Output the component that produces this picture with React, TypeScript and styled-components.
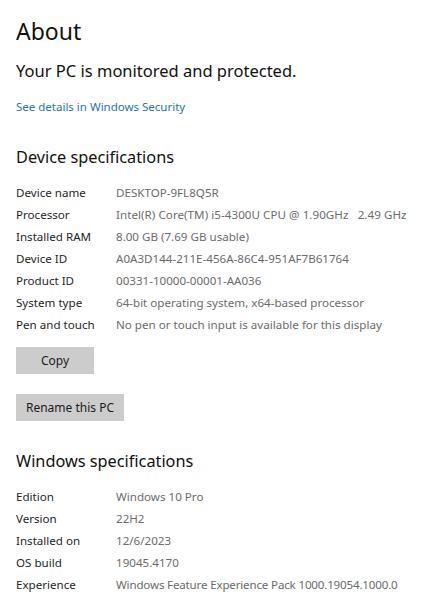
import React from "react";
import styled, { createGlobalStyle } from "styled-components";

const Global = createGlobalStyle`
  html, body { margin: 0; padding: 0; background: #ffffff; }
  body { font-family: "Noto Sans", "Open Sans", sans-serif; color: #1a1a1a; }
  * { box-sizing: border-box; }
`;

const Page = styled.div`
  width: 421px;
  height: 600px;
  overflow: hidden;
  padding: 14px 16px 0 16px;
  display: flex;
  flex-direction: column;
  align-items: flex-start;
  & > * { flex-shrink: 0; }
`;

const Title = styled.h1`
  margin: 0;
  font-size: 23px;
  font-weight: 400;
  line-height: 34px;
  color: #111;
`;

const Status = styled.div`
  margin-top: 12px;
  font-size: 16.5px;
  line-height: 22px;
  color: #111;
`;

const Link = styled.a`
  margin-top: 17px;
  font-size: 11.5px;
  line-height: 16px;
  color: #2b72a8;
  text-decoration: none;
`;

const SectionTitle = styled.h2<{ $top: number }>`
  margin: ${(p) => p.$top}px 0 0 0;
  font-size: 16.3px;
  font-weight: 400;
  line-height: 24px;
  color: #111;
`;

const Table = styled.div`
  margin-top: 12px;
  display: flex;
  flex-direction: column;
  align-self: stretch;
`;

const Row = styled.div`
  display: grid;
  grid-template-columns: 100px 1fr;
  height: 22px;
  align-items: center;
  font-size: 11.6px;
  white-space: pre;
`;

const Label = styled.span`
  color: #1f1f1f;
`;

const Value = styled.span<{ $spacing: number }>`
  color: #6b6b6b;
  letter-spacing: ${(p) => p.$spacing}px;
`;

const Button = styled.button<{ $width: number; $top: number }>`
  margin-top: ${(p) => p.$top}px;
  width: ${(p) => p.$width}px;
  height: 27px;
  border: none;
  background: #cccccc;
  font-family: inherit;
  font-size: 12px;
  color: #1a1a1a;
  padding: 0;
`;

type Spec = [string, string, number?];

const device: Spec[] = [
  ["Device name", "DESKTOP-9FL8Q5R"],
  ["Processor", "Intel(R) Core(TM) i5-4300U CPU @ 1.90GHz   2.49 GHz", 0.05],
  ["Installed RAM", "8.00 GB (7.69 GB usable)"],
  ["Device ID", "A0A3D144-211E-456A-86C4-951AF7B61764"],
  ["Product ID", "00331-10000-00001-AA036"],
  ["System type", "64-bit operating system, x64-based processor"],
  ["Pen and touch", "No pen or touch input is available for this display"],
];

const windows: Spec[] = [
  ["Edition", "Windows 10 Pro"],
  ["Version", "22H2"],
  ["Installed on", "12/6/2023"],
  ["OS build", "19045.4170"],
  ["Experience", "Windows Feature Experience Pack 1000.19054.1000.0", -0.18],
];

const Specs = ({ rows }: { rows: Spec[] }) => (
  <Table>
    {rows.map(([k, v, s]) => (
      <Row key={k}>
        <Label>{k}</Label>
        <Value $spacing={s ?? 0}>{v}</Value>
      </Row>
    ))}
  </Table>
);

export default function App() {
  return (
    <>
      <Global />
      <Page>
        <Title>About</Title>
        <Status>Your PC is monitored and protected.</Status>
        <Link href="#">See details in Windows Security</Link>
        <SectionTitle $top={30}>Device specifications</SectionTitle>
        <Specs rows={device} />
        <Button $width={78} $top={12}>Copy</Button>
        <Button $width={108} $top={20}>Rename this PC</Button>
        <SectionTitle $top={28}>Windows specifications</SectionTitle>
        <Specs rows={windows} />
      </Page>
    </>
  );
}
